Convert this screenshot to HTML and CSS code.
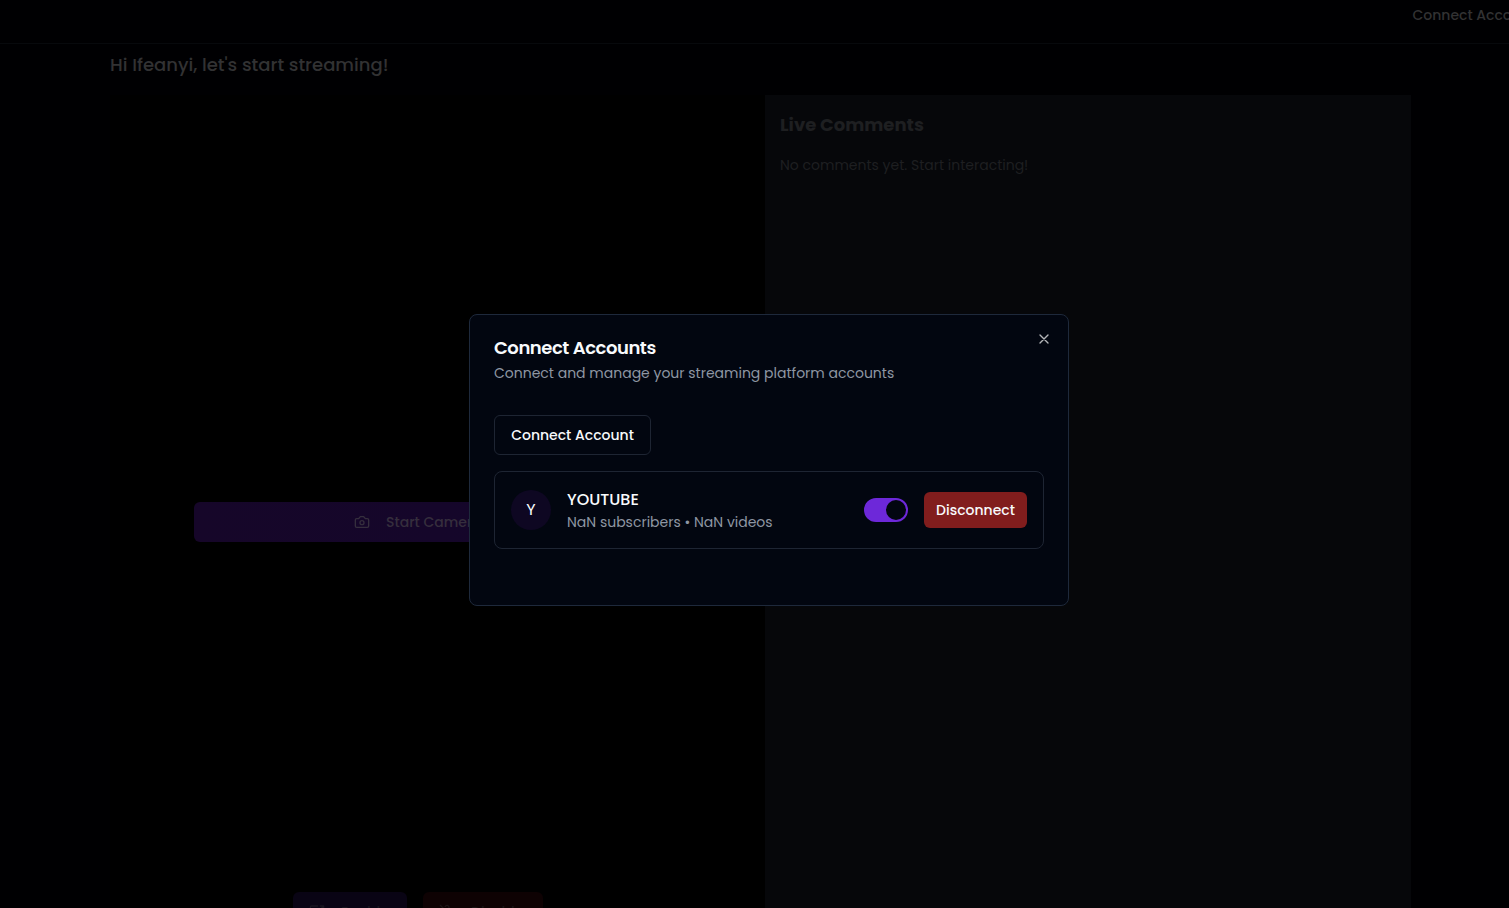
FILE: index.html
```html
<!DOCTYPE html>
<html lang="en">
<head>
<meta charset="utf-8">
<title>Connect Accounts</title>
<link rel="stylesheet" href="styles.css">
</head>
<body>
<div class="page">
  <header class="topbar"><span class="t nav-link">Connect Accounts</span></header>
  <main class="content">
    <h1 class="greeting"><span class="t">Hi Ifeanyi, let's start streaming!</span></h1>
    <div class="columns">
      <section class="stage">
        <button class="start"><svg class="icon" viewBox="0 0 24 24"><path d="M14.5 4h-5L7 7H4a2 2 0 0 0-2 2v9a2 2 0 0 0 2 2h16a2 2 0 0 0 2-2V9a2 2 0 0 0-2-2h-3l-2.500-3z"/><circle cx="12" cy="13" r="3"/></svg><span class="t">Start Camera</span></button>
        <div class="controls">
          <button class="control"><svg class="icon" viewBox="0 0 24 24"><path d="M13 3H4a2 2 0 0 0-2 2v10a2 2 0 0 0 2 2h16a2 2 0 0 0 2-2v-3M8 21h8M12 17v4M17 8l5-5M17 3h5v5"/></svg><span class="t">Enable</span></button>
          <button class="control control-red"><svg class="icon" viewBox="0 0 24 24"><path d="M2 2l20 20M18.900 13.200A7.100 7.100 0 0 0 19 12v-2M5 10v2a7 7 0 0 0 12 5M15 9.300V5a3 3 0 0 0-5.700-1.300M9 9v3a3 3 0 0 0 5.100 2.100M12 19v3"/></svg><span class="t">Disable</span></button>
        </div>
      </section>
      <aside class="comments">
        <h2 class="comments-title"><span class="t">Live Comments</span></h2>
        <p class="comments-empty"><span class="t">No comments yet. Start interacting!</span></p>
      </aside>
    </div>
  </main>
</div>
<div class="dialog" role="dialog">
  <button class="close" aria-label="Close"><svg class="icon" viewBox="0 0 24 24"><path d="M18 6 6 18M6 6l12 12"/></svg></button>
  <h2 class="title"><span class="t">Connect Accounts</span></h2>
  <p class="description"><span class="t">Connect and manage your streaming platform accounts</span></p>
  <button class="connect"><span class="t">Connect Account</span></button>
  <div class="account">
    <div class="avatar">Y</div>
    <div class="info">
      <div class="name"><span class="t">YOUTUBE</span></div>
      <div class="stats"><span class="t">NaN subscribers • NaN videos</span></div>
    </div>
    <div class="switch"><div class="thumb"></div></div>
    <button class="disconnect"><span class="t">Disconnect</span></button>
  </div>
</div>
</body>
</html>
```
FILE: styles.css
```css
* { box-sizing: border-box; margin: 0; }
body { height: 908px; overflow: hidden; background: #000; color: #f8fafc; font-family: Poppins, Inter, "Open Sans", sans-serif; font-size: 14px; }
button { font: inherit; border: 0; padding: 0; display: flex; align-items: center; justify-content: center; color: inherit; }
svg { fill: none; stroke: currentColor; stroke-width: 2; stroke-linecap: round; stroke-linejoin: round; }
.icon { width: 16px; height: 16px; flex: none; }
.t { white-space: nowrap; }
.page { height: 908px; overflow: hidden; background: #000002; color: #323233; }
.topbar { height: 44px; padding: 5px 0 0 1412.5px; border-bottom: 1px solid #07090c; line-height: 20px; font-weight: 500; overflow: hidden; }
.content { padding: 7px 98px 0 110px; }
.greeting { height: 44px; font-size: 18px; line-height: 28px; font-weight: 500; letter-spacing: .01px; }
.columns { display: flex; height: 850px; }
.stage { width: 655px; padding: 407px 0 0 84px; background: #000; }
.start { width: 487px; height: 40px; border-radius: 6px; background: linear-gradient(90deg, #160629, #14062b); color: #352e3d; gap: 16px; font-weight: 500; justify-content: flex-start; padding-left: 160px; }
.controls { display: flex; gap: 16px; padding: 350px 0 0 99px; }
.control { width: 114px; height: 40px; gap: 16px; padding: 0 16px; justify-content: flex-start; border-radius: 6px; background: #090414; color: #18151f; font-weight: 500; line-height: 20px; }
.control-red { width: 120px; background: #0e0203; color: #1b1415; }
.comments { flex: 1; padding: 16px 15px; background: #06070a; }
.comments-title { font-size: 18px; line-height: 28px; font-weight: 700; color: #1e1f21; }
.comments-empty { padding-top: 16px; line-height: 20px; color: #1e1f21; }
.dialog { position: absolute; left: 469px; top: 314px; width: 600px; height: 292px; padding: 24px; border: 1px solid #1e293b; border-radius: 8px; background: #020610; }
.close { position: absolute; right: 16px; top: 16px; width: 16px; height: 16px; background: none; color: #b4b6ba; }
.title { font-size: 18px; line-height: 18px; font-weight: 600; letter-spacing: -.45px; }
.description { margin-top: 6px; line-height: 20px; color: #8e96a3; }
.connect { width: 157px; height: 40px; margin-top: 32px; border: 1px solid #1e2533; border-radius: 6px; background: none; font-weight: 500; }
.account { display: flex; align-items: center; height: 78px; margin-top: 16px; padding: 0 16px; border: 1px solid #1e2533; border-radius: 8px; }
.avatar { display: grid; place-items: center; width: 40px; height: 40px; border-radius: 50%; background: #0e0722; font-size: 16px; line-height: 24px; padding-bottom: 1px; }
.info { flex: 1; margin-left: 16px; }
.name { font-size: 16px; line-height: 24px; font-weight: 500; }
.stats { line-height: 20px; color: #8e96a3; }
.switch { width: 44px; height: 24px; padding: 2px; border-radius: 12px; background: #6d28d9; display: flex; justify-content: flex-end; }
.thumb { width: 20px; height: 20px; border-radius: 50%; background: #020610; }
.disconnect { width: 103px; height: 36px; margin-left: 16px; border-radius: 6px; background: #811d1d; font-weight: 500; }
```
